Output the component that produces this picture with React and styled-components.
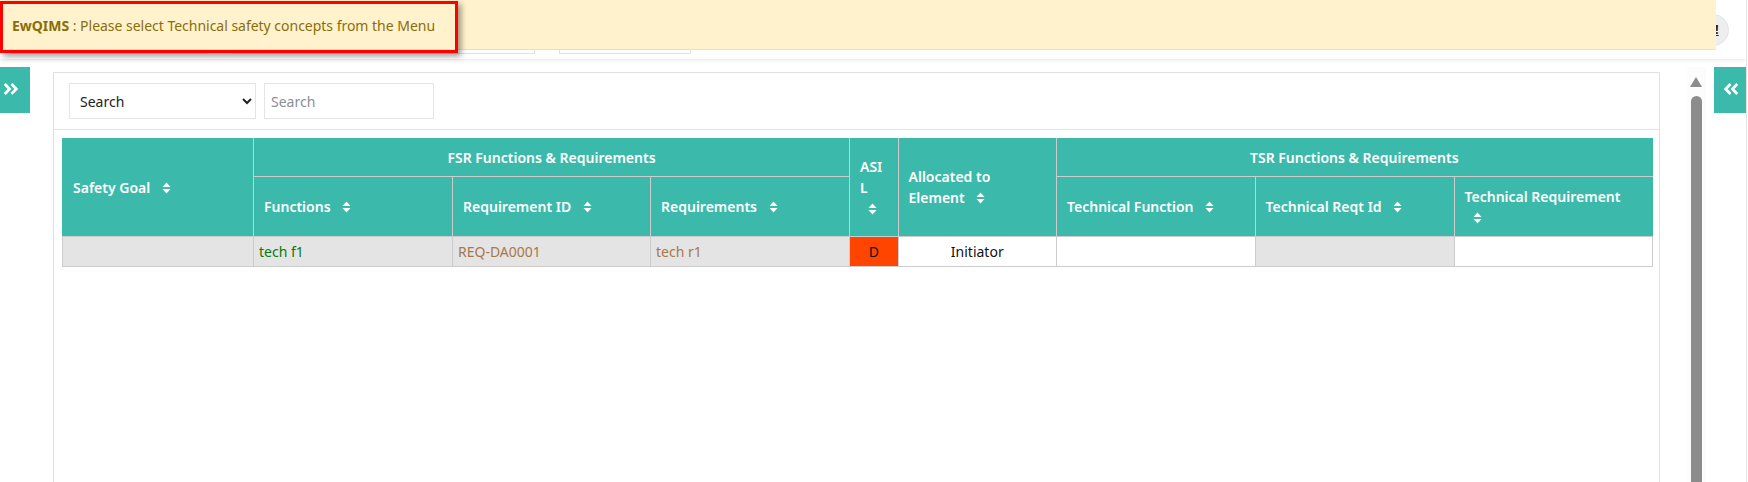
import React from 'react';
import styled, { createGlobalStyle } from 'styled-components';
import { FaAngleDoubleLeft, FaAngleDoubleRight } from 'react-icons/fa';

const GlobalStyle = createGlobalStyle`
  html, body {
    margin: 0;
    height: 100%;
    overflow: hidden;
    background: #fff;
    font-family: "Noto Sans", "Open Sans", sans-serif;
  }
  * {
    box-sizing: border-box;
  }
`;

const Page = styled.div`
  position: relative;
  width: 1747px;
  height: 482px;
  border-right: 1px solid #e4e4e4;
  overflow: hidden;
`;

const Header = styled.header`
  display: flex;
  gap: 24px;
  height: 59px;
  padding: 20px 0 5px 11px;
  background: #fff;
  box-shadow: 0 1px 4px rgba(0, 0, 0, 0.1);
`;

const HeaderBox = styled.div`
  width: ${(p) => p.$width}px;
  border: 1px solid #e2e2e2;
`;

const Circle = styled.div`
  position: absolute;
  top: 14px;
  left: 1697px;
  width: 32px;
  height: 32px;
  padding-left: 17px;
  border-radius: 50%;
  background: #eee;
  border: 1px solid #e4e4e4;
  color: #222;
  font-size: 13px;
  font-weight: 700;
  line-height: 28px;
  text-decoration: underline;
`;

const Banner = styled.div`
  position: absolute;
  top: 0;
  left: 0;
  width: 1716px;
  height: 50px;
  background: #fff2cc;
  border-bottom: 1px solid #e6e0cb;
`;

const Message = styled.div`
  position: absolute;
  top: 1px;
  left: 0;
  width: 458px;
  height: 52px;
  padding-left: 9px;
  border: 3px solid #f00;
  box-shadow: 3px 3px 6px rgba(0, 0, 0, 0.4);
  color: #8a6d0b;
  font-size: 14px;
  line-height: 44px;
  letter-spacing: -0.02px;
  white-space: nowrap;
  strong {
    font-weight: 700;
  }
`;

const Main = styled.main`
  display: flex;
  align-items: flex-start;
  padding-top: 8px;
`;

const SideButton = styled.button`
  display: flex;
  align-items: center;
  justify-content: ${(p) => (p.$left ? 'flex-start' : 'center')};
  flex: none;
  width: ${(p) => p.$width}px;
  height: 46px;
  margin-left: ${(p) => p.$gap || 0}px;
  padding: 0 0 2px ${(p) => (p.$left ? '2px' : '1px')};
  border: 0;
  background: #3bbaab;
  color: #fff;
  font-size: 18px;
`;

const Panel = styled.section`
  flex: none;
  width: 1607px;
  height: 420px;
  margin: 5px 0 0 23px;
  border: 1px solid #e0e0e0;
`;

const SearchBar = styled.div`
  display: flex;
  gap: 8px;
  height: 57px;
  padding: 10px 15px;
  border-bottom: 1px solid #e4e4e4;
`;

const SearchSelect = styled.select`
  width: 187px;
  height: 36px;
  padding-left: 6px;
  border: 1px solid #e4e4e4;
  background: #fff;
  color: #222;
  font-family: inherit;
  font-size: 14px;
`;

const SearchInput = styled.input`
  width: 170px;
  height: 36px;
  padding-left: 6px;
  border: 1px solid #e4e4e4;
  font-family: inherit;
  font-size: 14px;
  &::placeholder {
    color: #8a8f96;
  }
`;

const TableWrap = styled.div`
  padding: 8px 8px 0;
`;

const Table = styled.table`
  width: 1589.4px;
  table-layout: fixed;
  border-collapse: collapse;
  font-size: 14px;
`;

const HeadRow = styled.tr`
  height: ${(p) => p.$height}px;
`;

const Th = styled.th`
  padding: 0 10px ${(p) => p.$lift || 0}px;
  background: #3bbaab;
  border: 1px solid #ccc;
  border-top-color: #3bbaab;
  color: #fff;
  font-weight: 600;
  line-height: 21px;
  text-align: ${(p) => (p.$center ? 'center' : 'left')};
  word-break: break-word;
  &:first-child {
    border-left-color: #3bbaab;
  }
  &:last-child {
    border-right-color: #3bbaab;
  }
`;

const Td = styled.td`
  height: 30px;
  padding: 0 5px;
  background: ${(p) => p.$bg || '#fff'};
  border: 1px solid #ccc;
  color: ${(p) => p.$color || '#111'};
  font-size: 14px;
  text-align: ${(p) => (p.$center ? 'center' : 'left')};
`;

const SortIcon = styled.svg`
  display: inline-block;
  width: 9px;
  height: 12px;
  margin-left: 8px;
  vertical-align: -1px;
`;

const Scrollbar = styled.div`
  position: relative;
  flex: none;
  width: 19px;
  height: 415px;
  margin-left: 27px;
  background: #fcfcfc;
`;

const ScrollArrow = styled.div`
  position: absolute;
  top: 10px;
  left: 3px;
  width: 0;
  height: 0;
  border-left: 6.5px solid transparent;
  border-right: 6.5px solid transparent;
  border-bottom: 10px solid #8c8c8c;
`;

const ScrollThumb = styled.div`
  position: absolute;
  top: 29px;
  left: 4px;
  width: 11px;
  height: 400px;
  border-radius: 6px 6px 0 0;
  background: #8c8c8c;
`;

function Sort() {
  return (
    <SortIcon viewBox="0 0 9 12" aria-hidden="true">
      <path d="M4.5 0.5 L8.5 5 H0.5 Z M4.5 11.5 L0.5 7 H8.5 Z" fill="#fff" />
    </SortIcon>
  );
}

const widths = [191, 199, 198, 199, 48.5, 158.5, 198.5, 199, 198];

function App() {
  return (
    <Page>
      <GlobalStyle />
      <Header>
        <HeaderBox $width={197} />
        <HeaderBox $width={303} />
        <HeaderBox $width={132} />
      </Header>
      <Circle>!</Circle>
      <Banner />
      <Message>
        <strong>EwQIMS</strong> : Please select Technical safety concepts from the Menu
      </Message>
      <Main>
        <SideButton $width={30} $left>
          <FaAngleDoubleRight />
        </SideButton>
        <Panel>
          <SearchBar>
            <SearchSelect defaultValue="Search">
              <option>Search</option>
            </SearchSelect>
            <SearchInput placeholder="Search" />
          </SearchBar>
          <TableWrap>
            <Table>
              <colgroup>
                {widths.map((w, i) => (
                  <col key={i} width={w} />
                ))}
              </colgroup>
              <thead>
                <HeadRow $height={38}>
                  <Th rowSpan={2}>
                    Safety Goal <Sort />
                  </Th>
                  <Th colSpan={3} $center>
                    FSR Functions &amp; Requirements
                  </Th>
                  <Th rowSpan={2}>
                    ASIL
                    <br />
                    <Sort />
                  </Th>
                  <Th rowSpan={2} $lift={2}>
                    Allocated to Element <Sort />
                  </Th>
                  <Th colSpan={3} $center>
                    TSR Functions &amp; Requirements
                  </Th>
                </HeadRow>
                <HeadRow $height={60}>
                  <Th>
                    Functions <Sort />
                  </Th>
                  <Th>
                    Requirement ID <Sort />
                  </Th>
                  <Th>
                    Requirements <Sort />
                  </Th>
                  <Th>
                    Technical Function <Sort />
                  </Th>
                  <Th>
                    Technical Reqt Id <Sort />
                  </Th>
                  <Th>
                    Technical Requirement
                    <br />
                    <Sort />
                  </Th>
                </HeadRow>
              </thead>
              <tbody>
                <tr>
                  <Td $bg="#e4e4e4" />
                  <Td $bg="#e4e4e4" $color="#0a7a0a">
                    tech f1
                  </Td>
                  <Td $bg="#e4e4e4" $color="#a8784a">
                    REQ-DA0001
                  </Td>
                  <Td $bg="#e4e4e4" $color="#a8784a">
                    tech r1
                  </Td>
                  <Td $bg="#ff4500" $center>
                    D
                  </Td>
                  <Td $center>Initiator</Td>
                  <Td />
                  <Td $bg="#e4e4e4" />
                  <Td />
                </tr>
              </tbody>
            </Table>
          </TableWrap>
        </Panel>
        <Scrollbar>
          <ScrollArrow />
          <ScrollThumb />
        </Scrollbar>
        <SideButton $width={32} $gap={8}>
          <FaAngleDoubleLeft />
        </SideButton>
      </Main>
    </Page>
  );
}

export default App;
